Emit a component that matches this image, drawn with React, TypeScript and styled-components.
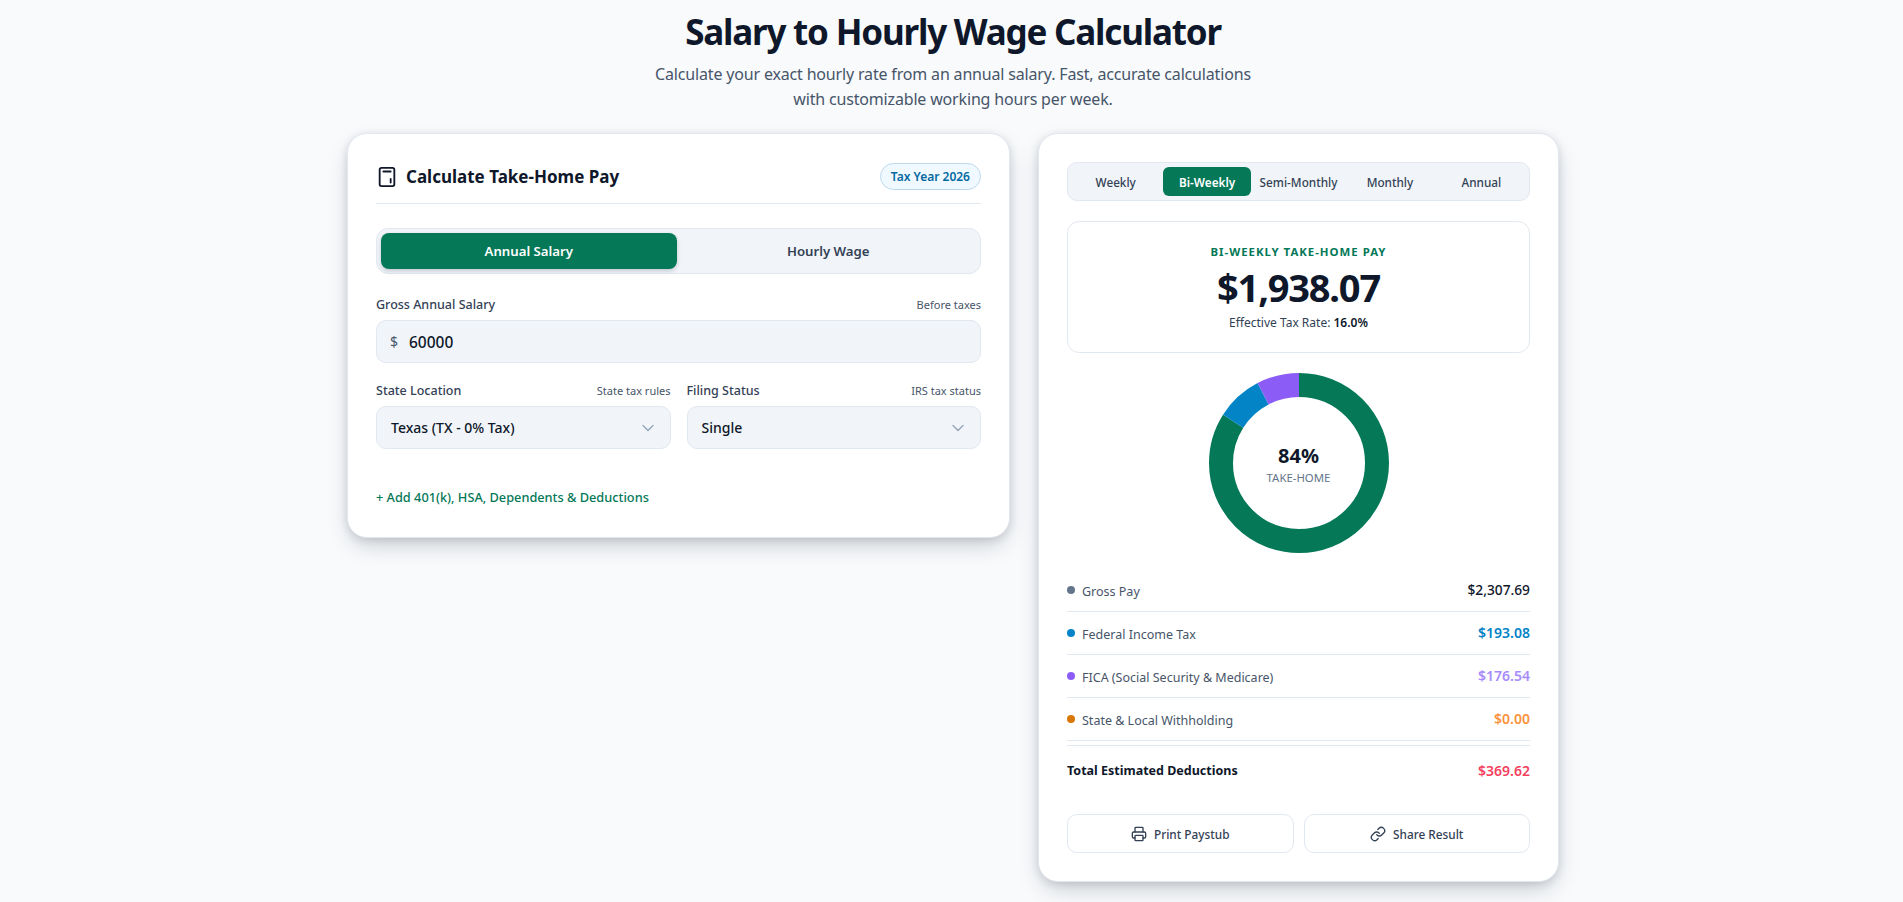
import React from 'react';
import styled, { createGlobalStyle } from 'styled-components';
import { ChevronDown, Link, Printer } from 'lucide-react';

const FONT = '"Noto Sans", "Open Sans", "Liberation Sans", sans-serif';

const GlobalStyle = createGlobalStyle`
    * {
        box-sizing: border-box;
    }
    body {
        margin: 0;
        background: #f8fafc;
        color: #0f172a;
        font-family: ${FONT};
    }
`;

const Page = styled.div`
    width: 1215px;
    margin: 0 auto;
    padding-left: 3px;
    min-height: 902px;
`;

const Hero = styled.header`
    text-align: center;
    height: 133px;
`;

const Title = styled.h1`
    margin: 0;
    padding-top: 7px;
    font-size: 35px;
    line-height: 50px;
    font-weight: 700;
    letter-spacing: -1.2px;
    color: #0f172a;
`;

const Subtitle = styled.p`
    margin: 5px auto 0;
    width: 620px;
    font-size: 16px;
    line-height: 25px;
    letter-spacing: -0.17px;
    color: #475569;
`;

const Columns = styled.div`
    display: grid;
    grid-template-columns: 663px 521px;
    gap: 28px;
    align-items: start;
`;

const Card = styled.section`
    background: #fff;
    border: 1px solid #e2e8f0;
    border-radius: 20px;
    padding: 28px;
    box-shadow: 0 10px 25px -5px rgba(15, 23, 42, 0.22), 0 2px 8px rgba(15, 23, 42, 0.12);
`;

const CardHeader = styled.div`
    display: flex;
    align-items: center;
    justify-content: space-between;
    height: 42px;
    padding-bottom: 12px;
    border-bottom: 1px solid #e2e8f0;
`;

const CardTitle = styled.h2`
    display: flex;
    align-items: center;
    gap: 8px;
    margin: 0;
    font-size: 17px;
    font-weight: 700;
`;

const Badge = styled.span`
    padding: 0 10px;
    height: 27px;
    line-height: 25px;
    border-radius: 14px;
    background: #f0f9ff;
    border: 1px solid #bcd9ec;
    color: #0369a1;
    font-size: 12px;
    font-weight: 600;
`;

const ModeTabs = styled.div`
    display: flex;
    gap: 4px;
    height: 46px;
    margin-top: 24px;
    padding: 4px;
    background: #f1f5f9;
    border: 1px solid #e2e8f0;
    border-radius: 12px;
`;

const ModeTab = styled.div<{ $active?: boolean }>`
    flex: 1;
    display: flex;
    align-items: center;
    justify-content: center;
    border-radius: 8px;
    font-size: 13.2px;
    font-weight: 600;
    color: ${(p) => (p.$active ? '#fff' : '#334155')};
    background: ${(p) => (p.$active ? '#047857' : 'transparent')};
    box-shadow: ${(p) => (p.$active ? '0 2px 4px rgba(15, 23, 42, 0.2)' : 'none')};
`;

const Field = styled.div`
    flex: 1;
`;

const FieldHead = styled.div`
    display: flex;
    align-items: center;
    justify-content: space-between;
    height: 20px;
    margin-bottom: 6px;
`;

const FieldLabel = styled.label`
    font-size: 12.5px;
    font-weight: 500;
    color: #334155;
`;

const FieldHint = styled.span`
    font-size: 11px;
    color: #475569;
`;

const SalaryField = styled(Field)`
    margin-top: 20px;
`;

const FieldRow = styled.div`
    display: flex;
    gap: 16px;
    margin-top: 17px;
`;

const InputBox = styled.div`
    display: flex;
    align-items: center;
    height: 43px;
    padding: 0 13px;
    background: #f1f5f9;
    border: 1px solid #e2e8f0;
    border-radius: 10px;
    font-size: 15.5px;
    font-weight: 500;
    color: #0f172a;
`;

const Dollar = styled.span`
    width: 19px;
    font-size: 14px;
    font-weight: 400;
    color: #475569;
`;

const SelectBox = styled(InputBox)`
    justify-content: space-between;
    padding: 0 12px 0 14px;
    font-size: 14px;
`;

const AddLink = styled.a`
    display: block;
    margin-top: 38px;
    margin-bottom: 2px;
    font-size: 12.75px;
    font-weight: 500;
    line-height: 20px;
    color: #047857;
`;

const PeriodTabs = styled.div`
    display: flex;
    gap: 4px;
    height: 39px;
    padding: 4px;
    background: #f1f5f9;
    border: 1px solid #e2e8f0;
    border-radius: 10px;
`;

const PeriodTab = styled.div<{ $active?: boolean }>`
    flex: 1;
    display: flex;
    align-items: center;
    justify-content: center;
    border-radius: 6px;
    font-size: 11.75px;
    font-weight: ${(p) => (p.$active ? 600 : 500)};
    white-space: nowrap;
    color: ${(p) => (p.$active ? '#fff' : '#334155')};
    background: ${(p) => (p.$active ? '#047857' : 'transparent')};
`;

const ResultBox = styled.div`
    height: 132px;
    margin-top: 20px;
    padding-top: 21px;
    text-align: center;
    border: 1px solid #e2e8f0;
    border-radius: 12px;
`;

const ResultLabel = styled.div`
    font-size: 11.4px;
    font-weight: 700;
    line-height: 18px;
    letter-spacing: 1px;
    color: #047857;
`;

const ResultAmount = styled.div`
    font-size: 38px;
    font-weight: 700;
    line-height: 53px;
    letter-spacing: -1.2px;
    color: #0f172a;
`;

const ResultRate = styled.div`
    margin-top: 1px;
    font-size: 12px;
    line-height: 16px;
    color: #334155;
`;

const RateValue = styled.strong`
    font-weight: 600;
    color: #0f172a;
`;

const ChartWrap = styled.div`
    position: relative;
    width: 180px;
    height: 180px;
    margin: 20px auto 0;
`;

const ChartCenter = styled.div`
    position: absolute;
    inset: 0;
    padding-top: 2px;
    display: flex;
    flex-direction: column;
    align-items: center;
    justify-content: center;
`;

const ChartPercent = styled.div`
    font-size: 20px;
    font-weight: 700;
    line-height: 28px;
    color: #0f172a;
`;

const ChartCaption = styled.div`
    font-size: 11.4px;
    line-height: 16px;
    color: #64748b;
`;

const Rows = styled.div`
    margin-top: 16px;
`;

const Row = styled.div`
    display: flex;
    align-items: center;
    justify-content: space-between;
    height: 43px;
    border-bottom: 1px solid #e2e8f0;
`;

const RowName = styled.span`
    display: flex;
    align-items: center;
    gap: 7px;
    font-size: 12.5px;
    color: #475569;
`;

const RowText = styled.span`
    margin-top: 2px;
`;

const Dot = styled.i<{ $color: string }>`
    width: 8px;
    height: 8px;
    border-radius: 50%;
    background: ${(p) => p.$color};
`;

const RowValue = styled.span<{ $color: string; $plain?: boolean }>`
    margin-bottom: 1px;
    font-size: ${(p) => (p.$plain ? '13.75px' : '14px')};
    font-weight: ${(p) => (p.$plain ? 500 : 600)};
    color: ${(p) => p.$color};
`;

const TotalRow = styled(Row)`
    height: 50px;
    margin-top: 4px;
    border-bottom: 0;
    border-top: 1px solid #e2e8f0;
`;

const TotalName = styled.span`
    font-size: 12.5px;
    font-weight: 700;
    color: #0f172a;
`;

const Actions = styled.div`
    display: flex;
    gap: 10px;
    margin-top: 19px;
`;

const ActionButton = styled.button`
    flex: 1;
    display: flex;
    align-items: center;
    justify-content: center;
    gap: 7px;
    height: 39px;
    background: #fff;
    border: 1px solid #e2e8f0;
    border-radius: 10px;
    font-family: ${FONT};
    font-size: 11.8px;
    font-weight: 500;
    color: #334155;
`;

const CalcIcon = () => (
    <svg width="22" height="22" viewBox="0 0 24 24" fill="none" stroke="#0f172a" strokeWidth="2" strokeLinecap="round">
        <rect x="4" y="2" width="16" height="20" rx="2" />
        <path d="M8 6h8M16 14v4" />
    </svg>
);

const rows = [
    { name: 'Gross Pay', dot: '#64748b', value: '$2,307.69', color: '#0f172a', plain: true },
    { name: 'Federal Income Tax', dot: '#0284c7', value: '$193.08', color: '#0284c7' },
    { name: 'FICA (Social Security & Medicare)', dot: '#8b5cf6', value: '$176.54', color: '#a78bfa' },
    { name: 'State & Local Withholding', dot: '#d97706', value: '$0.00', color: '#fb923c' },
];

const periods = ['Weekly', 'Bi-Weekly', 'Semi-Monthly', 'Monthly', 'Annual'];

const segments = [
    { color: '#047857', from: 0, size: 84 },
    { color: '#0284c7', from: 84, size: 8.37 },
    { color: '#8b5cf6', from: 92.37, size: 7.63 },
];

const Donut = () => (
    <svg width="180" height="180" viewBox="0 0 180 180">
        {segments.map((s) => (
            <circle
                key={s.color}
                cx="90"
                cy="90"
                r="78"
                fill="none"
                stroke={s.color}
                strokeWidth="24"
                pathLength={100}
                strokeDasharray={`${s.size} ${100 - s.size}`}
                strokeDashoffset={-s.from}
                transform="rotate(-90 90 90)"
            />
        ))}
    </svg>
);

export default function App() {
    return (
        <Page>
            <GlobalStyle />
            <Hero>
                <Title>Salary to Hourly Wage Calculator</Title>
                <Subtitle>
                    Calculate your exact hourly rate from an annual salary. Fast, accurate calculations with
                    customizable working hours per week.
                </Subtitle>
            </Hero>
            <Columns>
                <Card>
                    <CardHeader>
                        <CardTitle>
                            <CalcIcon />
                            Calculate Take-Home Pay
                        </CardTitle>
                        <Badge>Tax Year 2026</Badge>
                    </CardHeader>
                    <ModeTabs>
                        <ModeTab $active>Annual Salary</ModeTab>
                        <ModeTab>Hourly Wage</ModeTab>
                    </ModeTabs>
                    <SalaryField>
                        <FieldHead>
                            <FieldLabel>Gross Annual Salary</FieldLabel>
                            <FieldHint>Before taxes</FieldHint>
                        </FieldHead>
                        <InputBox>
                            <Dollar>$</Dollar>
                            60000
                        </InputBox>
                    </SalaryField>
                    <FieldRow>
                        <Field>
                            <FieldHead>
                                <FieldLabel>State Location</FieldLabel>
                                <FieldHint>State tax rules</FieldHint>
                            </FieldHead>
                            <SelectBox>
                                Texas (TX - 0% Tax)
                                <ChevronDown size={20} strokeWidth={1.5} color="#94a3b8" />
                            </SelectBox>
                        </Field>
                        <Field>
                            <FieldHead>
                                <FieldLabel>Filing Status</FieldLabel>
                                <FieldHint>IRS tax status</FieldHint>
                            </FieldHead>
                            <SelectBox>
                                Single
                                <ChevronDown size={20} strokeWidth={1.5} color="#94a3b8" />
                            </SelectBox>
                        </Field>
                    </FieldRow>
                    <AddLink>+ Add 401(k), HSA, Dependents &amp; Deductions</AddLink>
                </Card>
                <Card>
                    <PeriodTabs>
                        {periods.map((period) => (
                            <PeriodTab key={period} $active={period === 'Bi-Weekly'}>
                                {period}
                            </PeriodTab>
                        ))}
                    </PeriodTabs>
                    <ResultBox>
                        <ResultLabel>BI-WEEKLY TAKE-HOME PAY</ResultLabel>
                        <ResultAmount>$1,938.07</ResultAmount>
                        <ResultRate>
                            Effective Tax Rate: <RateValue>16.0%</RateValue>
                        </ResultRate>
                    </ResultBox>
                    <ChartWrap>
                        <Donut />
                        <ChartCenter>
                            <ChartPercent>84%</ChartPercent>
                            <ChartCaption>TAKE-HOME</ChartCaption>
                        </ChartCenter>
                    </ChartWrap>
                    <Rows>
                        {rows.map((row) => (
                            <Row key={row.name}>
                                <RowName>
                                    <Dot $color={row.dot} />
                                    <RowText>{row.name}</RowText>
                                </RowName>
                                <RowValue $color={row.color} $plain={row.plain}>
                                    {row.value}
                                </RowValue>
                            </Row>
                        ))}
                        <TotalRow>
                            <TotalName>Total Estimated Deductions</TotalName>
                            <RowValue $color="#f43f5e">$369.62</RowValue>
                        </TotalRow>
                    </Rows>
                    <Actions>
                        <ActionButton>
                            <Printer size={16} />
                            Print Paystub
                        </ActionButton>
                        <ActionButton>
                            <Link size={16} />
                            Share Result
                        </ActionButton>
                    </Actions>
                </Card>
            </Columns>
        </Page>
    );
}
